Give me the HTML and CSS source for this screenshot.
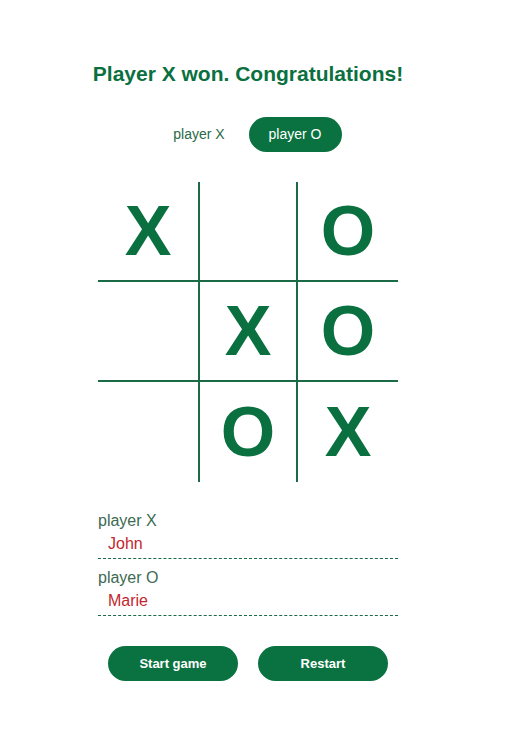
FILE: index.html
```html
<!DOCTYPE html>
<html>
<head>
    <title>Tic Tac Toe</title>
    <meta charset="utf-8" />
    <link rel="stylesheet" href="styles.css">
</head>
<body>
    <div id="app">
        <h1 class="status">Player X won. Congratulations!</h1>
        <div class="turns">
            <span class="turn">player X</span>
            <span class="turn active">player O</span>
        </div>
        <div class="board">
            <div class="cell">X</div>
            <div class="cell"></div>
            <div class="cell">O</div>
            <div class="cell"></div>
            <div class="cell">X</div>
            <div class="cell">O</div>
            <div class="cell"></div>
            <div class="cell">O</div>
            <div class="cell">X</div>
        </div>
        <div class="players">
            <div class="field">
                <label for="px">player X</label>
                <input id="px" type="text" value="John" />
            </div>
            <div class="field">
                <label for="po">player O</label>
                <input id="po" type="text" value="Marie" />
            </div>
        </div>
        <div class="actions">
            <button class="btn">Start game</button>
            <button class="btn">Restart</button>
        </div>
    </div>
</body>
</html>
```

FILE: styles.css
```css
body { margin: 0; font-family: "Liberation Sans", Arial, sans-serif; background: #fff; }
#app { width: 496px; padding-top: 62px; display: flex; flex-direction: column; align-items: center; }
.status { margin: 0; font-size: 21px; line-height: 24px; font-weight: bold; color: #0b7040; }
.turns { display: flex; gap: 3px; margin-top: 31px; margin-right: 2px; }
.turn { width: 93px; height: 35px; line-height: 35px; text-align: center; border-radius: 18px; font-size: 14px; color: #2a6a48; }
.turn.active { background: #0a7240; color: #fff; }
.board { display: grid; grid-template-columns: 102px 98px 100px; grid-template-rows: 100px 100px 100px; margin-top: 30px; }
.cell { display: flex; align-items: center; justify-content: center; font-size: 70px; font-weight: bold; color: #0a7040; border-right: 2px solid #1a6a48; border-bottom: 2px solid #1a6a48; }
.cell:nth-child(3n) { border-right: none; }
.cell:nth-child(n+7) { border-bottom: none; }
.players { width: 300px; margin-top: 30px; }
.field + .field { margin-top: 10px; }
.field label { display: block; font-size: 16px; line-height: 18px; color: #3d6a52; }
.field input { display: block; box-sizing: border-box; width: 300px; margin: 0; padding: 5px 10px 5px; border: none; border-bottom: 1px dashed #1a6a48; font-family: inherit; font-size: 16px; line-height: 18px; color: #c2272d; outline: none; }
.actions { display: flex; gap: 20px; margin-top: 30px; }
.btn { width: 130px; height: 35px; border: none; border-radius: 18px; background: #0a7240; color: #fff; font-family: inherit; font-size: 13px; font-weight: bold; }
```
